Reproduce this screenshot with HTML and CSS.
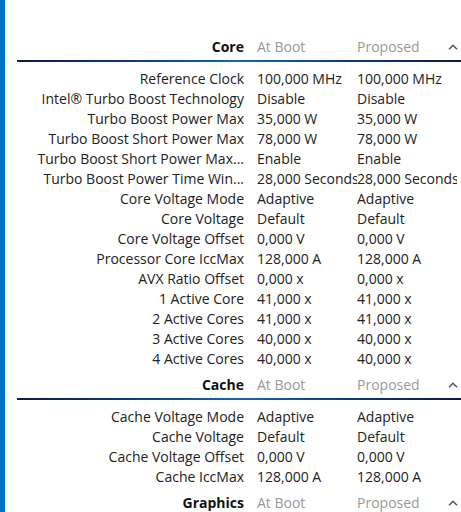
FILE: index.html
```html
<!DOCTYPE html>
<html>
<head>
<meta charset="utf-8">
<link rel="stylesheet" href="styles.css">
</head>
<body>
<div class="app">
  <div class="accent"></div>
  <div class="content">
    <section class="group">
      <div class="group-head">
        <div class="g-title">Core</div>
        <div class="g-col">At Boot</div>
        <div class="g-col">Proposed</div>
        <div class="g-chev"><svg width="10" height="6" viewBox="0 0 10 6"><polyline points="1,5.2 5,1.2 9,5.2" fill="none" stroke="#555" stroke-width="1.5"/></svg></div>
      </div>
      <div class="rule"></div>
      <div class="rows">
        <div class="row"><div class="lbl">Reference Clock</div><div class="val">100,000 MHz</div><div class="val">100,000 MHz</div></div>
        <div class="row"><div class="lbl">Intel® Turbo Boost Technology</div><div class="val">Disable</div><div class="val">Disable</div></div>
        <div class="row"><div class="lbl">Turbo Boost Power Max</div><div class="val">35,000 W</div><div class="val">35,000 W</div></div>
        <div class="row"><div class="lbl">Turbo Boost Short Power Max</div><div class="val">78,000 W</div><div class="val">78,000 W</div></div>
        <div class="row"><div class="lbl">Turbo Boost Short Power Max...</div><div class="val">Enable</div><div class="val">Enable</div></div>
        <div class="row"><div class="lbl">Turbo Boost Power Time Win...</div><div class="val">28,000 Seconds</div><div class="val">28,000 Seconds</div></div>
        <div class="row"><div class="lbl">Core Voltage Mode</div><div class="val">Adaptive</div><div class="val">Adaptive</div></div>
        <div class="row"><div class="lbl">Core Voltage</div><div class="val">Default</div><div class="val">Default</div></div>
        <div class="row"><div class="lbl">Core Voltage Offset</div><div class="val">0,000 V</div><div class="val">0,000 V</div></div>
        <div class="row"><div class="lbl">Processor Core IccMax</div><div class="val">128,000 A</div><div class="val">128,000 A</div></div>
        <div class="row"><div class="lbl">AVX Ratio Offset</div><div class="val">0,000 x</div><div class="val">0,000 x</div></div>
        <div class="row"><div class="lbl">1 Active Core</div><div class="val">41,000 x</div><div class="val">41,000 x</div></div>
        <div class="row"><div class="lbl">2 Active Cores</div><div class="val">41,000 x</div><div class="val">41,000 x</div></div>
        <div class="row"><div class="lbl">3 Active Cores</div><div class="val">40,000 x</div><div class="val">40,000 x</div></div>
        <div class="row"><div class="lbl">4 Active Cores</div><div class="val">40,000 x</div><div class="val">40,000 x</div></div>
      </div>
    </section>
    <section class="group">
      <div class="group-head">
        <div class="g-title">Cache</div>
        <div class="g-col">At Boot</div>
        <div class="g-col">Proposed</div>
        <div class="g-chev"><svg width="10" height="6" viewBox="0 0 10 6"><polyline points="1,5.2 5,1.2 9,5.2" fill="none" stroke="#555" stroke-width="1.5"/></svg></div>
      </div>
      <div class="rule"></div>
      <div class="rows">
        <div class="row"><div class="lbl">Cache Voltage Mode</div><div class="val">Adaptive</div><div class="val">Adaptive</div></div>
        <div class="row"><div class="lbl">Cache Voltage</div><div class="val">Default</div><div class="val">Default</div></div>
        <div class="row"><div class="lbl">Cache Voltage Offset</div><div class="val">0,000 V</div><div class="val">0,000 V</div></div>
        <div class="row"><div class="lbl">Cache IccMax</div><div class="val">128,000 A</div><div class="val">128,000 A</div></div>
      </div>
    </section>
    <section class="group">
      <div class="group-head">
        <div class="g-title">Graphics</div>
        <div class="g-col">At Boot</div>
        <div class="g-col">Proposed</div>
        <div class="g-chev"><svg width="10" height="6" viewBox="0 0 10 6"><polyline points="1,5.2 5,1.2 9,5.2" fill="none" stroke="#555" stroke-width="1.5"/></svg></div>
      </div>
    </section>
  </div>
</div>
</body>
</html>
```

FILE: styles.css
```css
html, body {
  margin: 0;
  padding: 0;
  background: #fff;
  width: 461px;
  height: 512px;
  overflow: hidden;
}
body {
  font-family: "Open Sans", "Noto Sans", "Liberation Sans", sans-serif;
  font-size: 14px;
  color: #222;
}
.app {
  display: flex;
  height: 512px;
}
.accent {
  width: 5px;
  flex: 0 0 5px;
  background: #0071c5;
}
.content {
  flex: 1;
  margin-left: 12px;
  padding-top: 31px;
  overflow: hidden;
}
.group-head {
  display: grid;
  grid-template-columns: 240px 100px 91px 1fr;
  height: 29px;
  padding-top: 6px;
  box-sizing: border-box;
  line-height: 20px;
}
.g-title {
  font-weight: 700;
  text-align: right;
  padding-right: 13px;
  color: #111;
}
.g-col {
  color: #999;
  white-space: nowrap;
}
.g-chev {
  display: flex;
  align-items: center;
  height: 20px;
}
.g-chev svg {
  display: block;
}
.rule {
  height: 2px;
  background: linear-gradient(90deg, #0a1a4e 0%, #0c3a80 25%, #1566b2 50%, #0c3a80 75%, #0a1a44 100%);
  margin-bottom: 7px;
}
.row {
  display: grid;
  grid-template-columns: 240px 100px 100px;
  height: 20px;
  line-height: 20px;
}
.lbl {
  text-align: right;
  padding-right: 13px;
  white-space: nowrap;
  overflow: hidden;
}
.val {
  white-space: nowrap;
  overflow: hidden;
}
```
